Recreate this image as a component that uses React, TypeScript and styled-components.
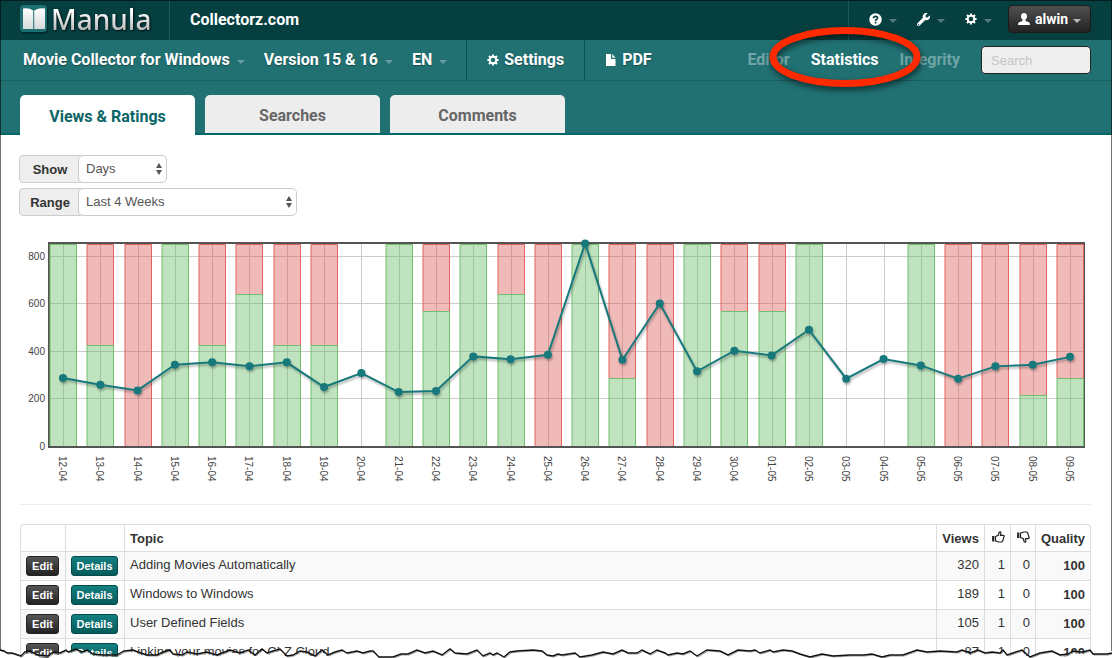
import React from 'react';
import styled, { createGlobalStyle, css } from 'styled-components';
import { FaWrench } from 'react-icons/fa';

const display = `Roboto, 'Noto Sans', sans-serif`;
const body = `'Liberation Sans', Arial, sans-serif`;

const GlobalStyle = createGlobalStyle`
  *, *::before, *::after { box-sizing: border-box; }
  body { margin: 0; background: #fff; color: #333; font: 13px/18px ${body}; }
  a { color: inherit; text-decoration: none; }
  button, input, select { font: inherit; }
`;

const Page = styled.div`
  position: relative;
  overflow: hidden;
`;

const Frame = styled.div`
  position: absolute;
  inset: 0 0 8px 0;
  border: 1px solid rgba(0, 0, 0, 0.55);
  border-bottom: 0;
  pointer-events: none;
`;

/* ---------- top bars ---------- */

const TopBar = styled.header`
  display: flex;
  height: 40px;
  padding: 0 21px 0 20px;
  background: #053f40;
  color: #fff;
  font-family: ${display};
`;

const Brand = styled.a`
  display: flex;
  align-items: center;
  gap: 3px;
  width: 150px;
  padding-bottom: 2px;
  border-right: 1px solid #1a5a5b;
`;

const BrandName = styled.span`
  font: 500 28px/36px 'Noto Sans', sans-serif;
  background: linear-gradient(#fff 30%, #b9b9b9 80%);
  background-clip: text;
  color: transparent;
  filter: drop-shadow(1px 1px 1px rgba(0, 0, 0, 0.7));
`;

const Company = styled.a`
  padding-left: 20px;
  font-size: 16px;
  line-height: 40px;
  font-weight: 700;
`;

const Tools = styled.div`
  display: flex;
  align-items: center;
  gap: 20px;
  margin-left: auto;
  padding: 0 0 2px 20px;
  border-left: 1px solid #1a5a5b;
`;

const ToolButton = styled.button`
  display: flex;
  align-items: center;
  gap: 7px;
  padding: 0;
  border: 0;
  background: none;
  color: #fff;
`;

const Caret = styled.span<{ $bright?: boolean }>`
  width: 0;
  height: 0;
  margin-top: 3px;
  border: 4px solid transparent;
  border-bottom: 0;
  border-top-color: ${(p) => (p.$bright ? '#bbb' : 'rgba(255,255,255,0.32)')};
`;

const UserButton = styled.button`
  display: flex;
  align-items: center;
  justify-content: center;
  gap: 5px;
  width: 83px;
  height: 28px;
  margin-left: -4px;
  padding: 0;
  border: 1px solid #1b1b1b;
  border-radius: 4px;
  background: linear-gradient(#505050, #222);
  color: #fff;
  font-size: 14px;
  line-height: 18px;
  font-weight: 700;
`;

const ManualBar = styled.nav`
  display: flex;
  height: 41px;
  padding: 0 21px 0 23px;
  border-bottom: 1px solid #1a5f61;
  background: #217173;
  color: #fff;
  font-family: ${display};
  font-size: 16px;
  line-height: 40px;
  font-weight: 700;
`;

const Picker = styled.a`
  display: flex;
  align-items: center;
  gap: 7px;
  height: 40px;
  margin-right: 19px;
  text-shadow: 0 1px 1px rgba(0, 0, 0, 0.35);
`;

const BarLink = styled.a`
  display: flex;
  align-items: center;
  gap: 5px;
  height: 40px;
  padding: 0 20px;
  border-left: 1px solid #075556;
  text-shadow: 0 1px 1px rgba(0, 0, 0, 0.35);
`;

const Views = styled.div`
  display: flex;
  gap: 21px;
  margin-left: auto;
`;

const ViewLink = styled.a<{ $active?: boolean }>`
  position: relative;
  color: ${(p) => (p.$active ? '#fff' : '#6fa5a6')};
`;

const Highlight = styled.svg`
  position: absolute;
  left: 50%;
  top: 50%;
  width: 164px;
  height: 76px;
  margin: -41px 0 0 -82px;
  z-index: 2;
  filter: drop-shadow(1px 3px 3px rgba(0, 0, 0, 0.6));
  pointer-events: none;
`;

const Search = styled.input`
  width: 110px;
  height: 28px;
  margin-top: 6px;
  padding: 0 9px;
  border: 1px solid #222;
  border-radius: 4px;
  background: #eee;
  font: 13px/18px ${body};
  &::placeholder { color: #c4c4c4; opacity: 1; }
`;

/* ---------- tabs ---------- */

const TabBar = styled.div`
  display: flex;
  gap: 10px;
  height: 54px;
  padding: 14px 20px 0;
  background: linear-gradient(#217173 52px, #006869 52px);
`;

const Tab = styled.button<{ $active?: boolean }>`
  width: 175px;
  height: 38px;
  padding: 3px 0 0;
  border: 0;
  border-radius: 5px 5px 0 0;
  background: #ededed;
  color: #666;
  font: 700 16px/20px ${display};
  ${(p) =>
    p.$active &&
    css`
      height: 40px;
      background: #fff;
      color: #0b6566;
    `}
`;

/* ---------- content ---------- */

const Content = styled.main`
  padding: 20px 21px 0 20px;
`;

const Field = styled.div`
  display: flex;
  height: 28px;
  margin: 0 0 5px -1px;
`;

const FieldLabel = styled.label`
  width: 62px;
  margin-right: -3px;
  border: 1px solid #ccc;
  border-radius: 4px 0 0 4px;
  background: #eee;
  line-height: 27px;
  font-weight: 700;
  text-align: center;
`;

const SelectBox = styled.span<{ $width: number }>`
  position: relative;
  width: ${(p) => p.$width}px;
`;

const Select = styled.select`
  width: 100%;
  height: 28px;
  padding: 0 20px 0 7px;
  border: 1px solid #ccc;
  border-radius: 5px;
  background: #fff;
  color: #555;
  appearance: none;
`;

const Arrows = styled.svg`
  position: absolute;
  right: 5px;
  top: 8px;
  pointer-events: none;
`;

const Chart = styled.svg`
  display: block;
  width: 100%;
  margin-top: 9px;
  overflow: visible;
`;

const Rule = styled.hr`
  height: 1px;
  margin: 4px 0 19px;
  border: 0;
  background: #eee;
`;

const Table = styled.table`
  width: 100%;
  margin-bottom: -22px;
  border: 1px solid #ddd;
  border-left: 0;
  border-radius: 4px 4px 0 0;
  border-spacing: 0;
  th, td {
    border-left: 1px solid #ddd;
    text-align: left;
    vertical-align: top;
  }
  th:first-child { border-top-left-radius: 4px; }
  th { height: 26px; padding: 5px 5px 3px; }
  td { height: 29px; padding: 4px 5px; border-top: 1px solid #ddd; }
  tbody tr:nth-child(odd) { background: #f9f9f9; }
`;

const Head = styled.th<{ $width: number; $number?: boolean }>`
  && {
    width: ${(p) => p.$width}px;
    white-space: nowrap;
    ${(p) => p.$number && 'text-align: right;'}
  }
`;

const Num = styled.td<{ $bold?: boolean }>`
  && {
    text-align: right;
    ${(p) => p.$bold && 'padding-top: 5px; font-weight: 700;'}
  }
`;

const RowButton = styled.button<{ $teal?: boolean }>`
  display: block;
  width: ${(p) => (p.$teal ? 47 : 33)}px;
  height: 20px;
  padding: 0;
  border: 1px solid ${(p) => (p.$teal ? '#044a4b' : '#222')};
  border-radius: 3px;
  background: ${(p) => (p.$teal ? 'linear-gradient(#148081, #055a5b)' : 'linear-gradient(#555, #222)')};
  color: #fff;
  font-size: 11px;
  line-height: 18px;
  font-weight: 700;
  text-align: center;
`;

const TornEdge = styled.svg`
  position: relative;
  display: block;
  width: 100%;
  height: 13px;
`;

/* ---------- icons ---------- */

const BookLogo = () => (
  <svg width="28" height="30" viewBox="0 0 28 30" aria-hidden="true">
    <defs>
      <linearGradient id="page" x1="0" y1="0" x2="0" y2="1">
        <stop offset="0" stopColor="#fff" />
        <stop offset="1" stopColor="#d5dada" />
      </linearGradient>
    </defs>
    <rect x="1" y="3" width="27" height="27" rx="4" fill="#022c2d" />
    <rect x="0" y="1" width="27" height="27" rx="4" fill="#1d7072" />
    <path d="M3 4.500Q9 3.500 13.200 6.500V25H3ZM25 4.500Q19 3.500 14.200 6.500V25H25Z" fill="url(#page)" />
  </svg>
);

const Cog = () => (
  <svg width="12" height="12" viewBox="0 0 12 12" fill="none" stroke="currentColor" aria-hidden="true">
    <circle cx="6" cy="6" r="3.300" strokeWidth="2" />
    <path
      d="M6 .4V2.500M6 9.500V11.600M.4 6H2.500M9.500 6H11.600M2 2L3.500 3.500M8.500 8.500L10 10M10 2L8.500 3.500M3.500 8.500L2 10"
      strokeWidth="2"
    />
  </svg>
);

const Help = () => (
  <svg width="13" height="13" viewBox="0 0 13 13" aria-hidden="true">
    <circle cx="6.500" cy="6.500" r="6.200" fill="#fff" />
    <path d="M4.500 5.200Q4.500 3.300 6.500 3.300T8.500 5Q8.500 6 7.300 6.500Q6.600 6.900 6.600 7.900M6.600 8.800V10.400" fill="none" stroke="#053f40" strokeWidth="1.700" />
  </svg>
);

const Person = () => (
  <svg width="12" height="12" viewBox="0 0 12 12" fill="currentColor" aria-hidden="true">
    <path d="M6 0C7.900 0 9 1.300 9 3.200C9 4.700 8.300 5.700 7.500 6.500V7.900L11 9.300Q12 9.800 12 12H0Q0 9.800 1 9.300L4.500 7.900V6.500C3.700 5.700 3 4.700 3 3.200C3 1.300 4.100 0 6 0Z" />
  </svg>
);

const FileIcon = () => (
  <svg width="12" height="12" viewBox="0 0 12 12" fill="currentColor" aria-hidden="true">
    <path d="M1 0H6V5H10.500V12H1Z M7.200 0L10.500 3.800H7.200Z" />
  </svg>
);

const Thumb = ({ down }: { down?: boolean }) => (
  <svg width="13" height="12" viewBox="0 0 13 12" fill="none" stroke="#222" strokeWidth="1.200" role="img" aria-label={down ? 'Dislikes' : 'Likes'}>
    <g transform={down ? 'matrix(1 0 0 -1 0 12)' : undefined}>
      <path d="M1.200 5V10.500" strokeWidth="2.200" />
      <path d="M3.500 5.500L6.300 4.200L7.300 1Q8.700 .3 8.900 1.800L8.500 4.300H11.500Q12.600 4.800 11.900 5.900L10.700 10Q10.200 11 9.200 11H6.500L3.500 9.900Z" />
    </g>
  </svg>
);

/* ---------- chart ---------- */

type Day = { date: string; views: number; good: number | null };

const days: Day[] = [
  ['12-04', 286, 1], ['13-04', 258, 1 / 2], ['14-04', 234, 0], ['15-04', 342, 1],
  ['16-04', 352, 1 / 2], ['17-04', 335, 3 / 4], ['18-04', 352, 1 / 2], ['19-04', 248, 1 / 2],
  ['20-04', 307, null], ['21-04', 227, 1], ['22-04', 231, 2 / 3], ['23-04', 377, 1],
  ['24-04', 365, 3 / 4], ['25-04', 384, 0], ['26-04', 852, 1], ['27-04', 363, 1 / 3],
  ['28-04', 600, 0], ['29-04', 314, 1], ['30-04', 401, 2 / 3], ['01-05', 381, 2 / 3],
  ['02-05', 489, 1], ['03-05', 283, null], ['04-05', 366, null], ['05-05', 339, 1],
  ['06-05', 283, 0], ['07-05', 335, 0], ['08-05', 342, 1 / 4], ['09-05', 375, 1 / 3],
].map(([date, views, good]) => ({ date, views, good }) as Day);

const TOP = 18;
const BOTTOM = 221;
const dayX = (i: number) => 43 + (i * 1007) / 27;
const viewsY = (v: number) => BOTTOM - (v * (BOTTOM - TOP)) / 854;

const ViewsChart = () => (
  <Chart viewBox="0 0 1071 275" role="img" aria-label="Views and ratings per day" fontFamily={body} fontSize="10" fill="#444">
    {[200, 400, 600, 800].map((v) => (
      <path key={v} d={`M30 ${Math.round(viewsY(v)) + 0.5}H1064`} stroke="#ccc" />
    ))}
    {[0, 200, 400, 600, 800].map((v) => (
      <text key={v} x="25" y={Math.round(viewsY(v)) + 4} textAnchor="end">{v}</text>
    ))}
    {days.map((d, i) => (
      <path key={d.date} d={`M${Math.round(dayX(i)) + 0.5} ${TOP}V${BOTTOM}`} stroke="#ccc" />
    ))}
    <rect x="29" y="18" width="1035" height="204" fill="none" stroke="#545454" strokeWidth="2" />
    {days.map((d, i) => {
      if (d.good === null) return null;
      const x = Math.round(dayX(i)) - 13;
      const split = Math.round(BOTTOM - d.good * (BOTTOM - TOP)) + 0.5;
      const top = Math.max(split, 19.5);
      return (
        <g key={d.date}>
          {d.good < 1 && (
            <path d={`M${x} ${Math.min(split, 221)}V19.500H${x + 26.5}V${Math.min(split, 221)}${d.good > 0 ? 'Z' : ''}`} fill="rgba(217,83,79,.4)" stroke="#e0635e" />
          )}
          {d.good > 0 && (
            <path d={`M${x} 221V${top}H${x + 26.5}V221`} fill="rgba(92,184,92,.4)" stroke="#6fbf6c" />
          )}
        </g>
      );
    })}
    <g style={{ filter: 'drop-shadow(1px 2px 1px rgba(0,0,0,.3))' }}>
      <polyline points={days.map((d, i) => `${dayX(i)},${viewsY(d.views)}`).join(' ')} fill="none" stroke="#17797b" strokeWidth="2" />
      {days.map((d, i) => (
        <circle key={d.date} cx={dayX(i)} cy={viewsY(d.views)} r="4" fill="#17797b" />
      ))}
    </g>
    {days.map((d, i) => (
      <text key={d.date} transform={`translate(${Math.round(dayX(i)) - 4} 231) rotate(90)`}>{d.date}</text>
    ))}
  </Chart>
);

/* ---------- torn paper edge ---------- */

const tear =
  '0,4 4,5 7,7 12,7 21,10 25,6 30,5 38,9 48,10 53,6 60,7 66,4 68,6 76,3 82,6 87,4 93,8 103,9 117,9 124,5 133,4 138,6 147,9 157,9 163,6 170,4 173,8 182,9 187,6 197,8 207,6 217,9 222,7 230,4 240,7 248,4 255,9 262,3 267,7 273,5 280,3 287,10 293,9 300,5 307,6 315,10 322,4 328,9 335,6 342,4 347,7 357,5 363,7 370,5 373,5 379,11 393,11 401,8 408,8 417,4 425,7 433,5 442,9 450,3 455,7 467,8 477,4 483,10 490,7 493,9 497,7 504,11 510,6 517,5 533,4 542,5 547,9 553,10 558,8 562,9 575,7 580,11 592,9 603,6 613,8 622,4 628,7 637,7 642,4 650,8 657,4 665,7 668,9 677,7 683,8 690,5 697,10 707,4 720,5 728,9 738,4 750,5 755,4 760,7 770,4 773,6 783,4 792,5 800,8 810,11 822,8 833,10 850,9 858,9 864,9 872,8 882,11 890,9 903,9 917,4 927,6 940,5 957,6 962,4 970,7 978,4 985,7 992,6 1000,7 1003,4 1007,9 1013,7 1022,4 1030,11 1040,7 1052,5 1060,9 1068,8 1073,5 1080,6 1083,6 1090,4 1093,8 1107,8 1112,7';

const topics = [
  { title: 'Adding Movies Automatically', views: 320 },
  { title: 'Windows to Windows', views: 189 },
  { title: 'User Defined Fields', views: 105 },
  { title: 'Linking your movies for CLZ Cloud', views: 87 },
];

const SelectArrows = () => (
  <Arrows width="6" height="12" viewBox="0 0 6 12" fill="#555" aria-hidden="true">
    <path d="M3 0L6 5H0ZM3 12L6 7H0Z" />
  </Arrows>
);

export default function App() {
  return (
    <>
      <GlobalStyle />
      <Page>
        <TopBar>
          <Brand href="#"><BookLogo /><BrandName>Manula</BrandName></Brand>
          <Company href="#">Collectorz.com</Company>
          <Tools>
            <ToolButton aria-label="Help"><Help /><Caret /></ToolButton>
            <ToolButton aria-label="Tools"><FaWrench size={13} /><Caret /></ToolButton>
            <ToolButton aria-label="Options"><Cog /><Caret /></ToolButton>
            <UserButton><Person />alwin<Caret $bright /></UserButton>
          </Tools>
        </TopBar>
        <ManualBar>
          <Picker href="#">Movie Collector for Windows<Caret /></Picker>
          <Picker href="#">Version 15 &amp; 16<Caret /></Picker>
          <Picker href="#">EN<Caret /></Picker>
          <BarLink href="#"><Cog />Settings</BarLink>
          <BarLink href="#"><FileIcon />PDF</BarLink>
          <Views>
            <ViewLink href="#">Editor</ViewLink>
            <ViewLink href="#" $active>
              Statistics
              <Highlight viewBox="0 0 164 76" aria-hidden="true">
                <ellipse cx="82" cy="38" rx="72" ry="26.500" fill="none" stroke="#ff2a00" strokeWidth="7" />
              </Highlight>
            </ViewLink>
            <ViewLink href="#">Integrity</ViewLink>
            <Search placeholder="Search" aria-label="Search" />
          </Views>
        </ManualBar>
        <TabBar>
          <Tab $active>Views &amp; Ratings</Tab>
          <Tab>Searches</Tab>
          <Tab>Comments</Tab>
        </TabBar>
        <Content>
          <Field>
            <FieldLabel htmlFor="show">Show</FieldLabel>
            <SelectBox $width={89}>
              <Select id="show"><option>Days</option></Select>
              <SelectArrows />
            </SelectBox>
          </Field>
          <Field>
            <FieldLabel htmlFor="range">Range</FieldLabel>
            <SelectBox $width={219}>
              <Select id="range"><option>Last 4 Weeks</option></Select>
              <SelectArrows />
            </SelectBox>
          </Field>
          <ViewsChart />
          <Rule />
          <Table>
            <thead>
              <tr>
                <Head $width={45} aria-label="Edit" />
                <Head $width={59} aria-label="Details" />
                <th>Topic</th>
                <Head $number $width={48}>Views</Head>
                <Head $number $width={26}><Thumb /></Head>
                <Head $number $width={25}><Thumb down /></Head>
                <Head $number $width={55}>Quality</Head>
              </tr>
            </thead>
            <tbody>
              {topics.map((t) => (
                <tr key={t.title}>
                  <td><RowButton>Edit</RowButton></td>
                  <td><RowButton $teal>Details</RowButton></td>
                  <td>{t.title}</td>
                  <Num>{t.views}</Num>
                  <Num>1</Num>
                  <Num>0</Num>
                  <Num $bold>100</Num>
                </tr>
              ))}
            </tbody>
          </Table>
        </Content>
        <TornEdge viewBox="0 0 1112 13" preserveAspectRatio="none" aria-hidden="true">
          <polygon points={`${tear} 1112,60 0,60`} transform="translate(0 2)" fill="#fff" />
          <polyline points={tear} transform="translate(1 1)" fill="none" stroke="#999" strokeWidth="1" />
          <polyline points={tear} fill="none" stroke="#111" strokeWidth="1.400" />
        </TornEdge>
        <Frame />
      </Page>
    </>
  );
}
